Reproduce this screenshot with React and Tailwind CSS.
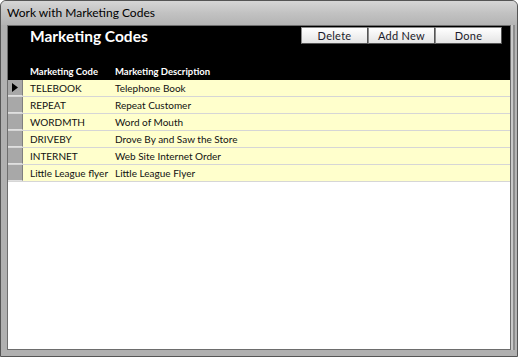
import React from 'react';

const rows = [
  { code: 'TELEBOOK', desc: 'Telephone Book', current: true },
  { code: 'REPEAT', desc: 'Repeat Customer' },
  { code: 'WORDMTH', desc: 'Word of Mouth' },
  { code: 'DRIVEBY', desc: 'Drove By and Saw the Store' },
  { code: 'INTERNET', desc: 'Web Site Internet Order' },
  { code: 'Little League flyer', desc: 'Little League Flyer' },
];

function FormButton({ label }) {
  return (
    <button className="h-[17px] w-[67px] bg-gradient-to-b from-white to-[#e4e4e4] border border-[#8a8a8a] border-b-[#555] border-r-[#555] text-[11px] leading-none text-[#1a1a2a] tracking-wide">
      {label}
    </button>
  );
}

export default function App() {
  return (
    <div
      className="w-[518px] h-[357px] bg-[#a9a9a9] rounded-t-[6px] border border-[#555] flex flex-col overflow-hidden"
      style={{ fontFamily: 'Lato, "Liberation Sans", sans-serif' }}
    >
      {/* title bar */}
      <div className="h-[24px] shrink-0 flex items-center pl-[6px] bg-gradient-to-b from-[#d6d6d6] via-[#c2c2c2] to-[#b4b4b4] text-[12px] text-black">
        Work with Marketing Codes
      </div>

      <div className="flex-1 flex pl-[6px] pb-[6px] bg-[#b0b0b0]">
        <div className="flex-1 flex flex-col bg-white border border-[#6d6d6d]">
          {/* header */}
          <div className="h-[54px] bg-black flex flex-col">
            <div className="flex items-start justify-between pl-[22px] pr-[8px] pt-[1px]">
              <div className="text-white font-bold text-[15.5px] leading-[20px] -mt-[1px]">Marketing Codes</div>
              <div className="flex">
                <FormButton label="Delete" />
                <FormButton label="Add New" />
                <FormButton label="Done" />
              </div>
            </div>
            <div className="flex mt-auto pb-[1px] text-white font-bold text-[9.5px] pl-[22px]">
              <div className="w-[85px]">Marketing Code</div>
              <div>Marketing Description</div>
            </div>
          </div>

          {/* rows */}
          <div className="flex flex-col">
            {rows.map((r) => (
              <div key={r.code} className="flex h-[17px] border-b border-[#d6d6d6]">
                <div className="w-[15px] shrink-0 bg-[#a8a8a8] border-r border-[#7f7f7f] border-b border-b-[#e0e0e0] flex items-center justify-center">
                  {r.current && (
                    <svg width="6" height="9" viewBox="0 0 6 9">
                      <path d="M0 0 L6 4.5 L0 9 Z" fill="#000" />
                    </svg>
                  )}
                </div>
                <div className="flex-1 flex items-center bg-[#ffffcc] text-[10px] text-[#111] pl-[7px] whitespace-nowrap">
                  <div className="w-[85px]">{r.code}</div>
                  <div>{r.desc}</div>
                </div>
              </div>
            ))}
          </div>
        </div>
        {/* right frame edge with darker band */}
        <div className="w-[6px] shrink-0 flex">
          <div className="w-[2px] bg-[#c8c8c8]" />
          <div className="w-[2px] bg-[#8c8c8c]" />
          <div className="w-[2px] bg-[#b4b4b4]" />
        </div>
      </div>
    </div>
  );
}
